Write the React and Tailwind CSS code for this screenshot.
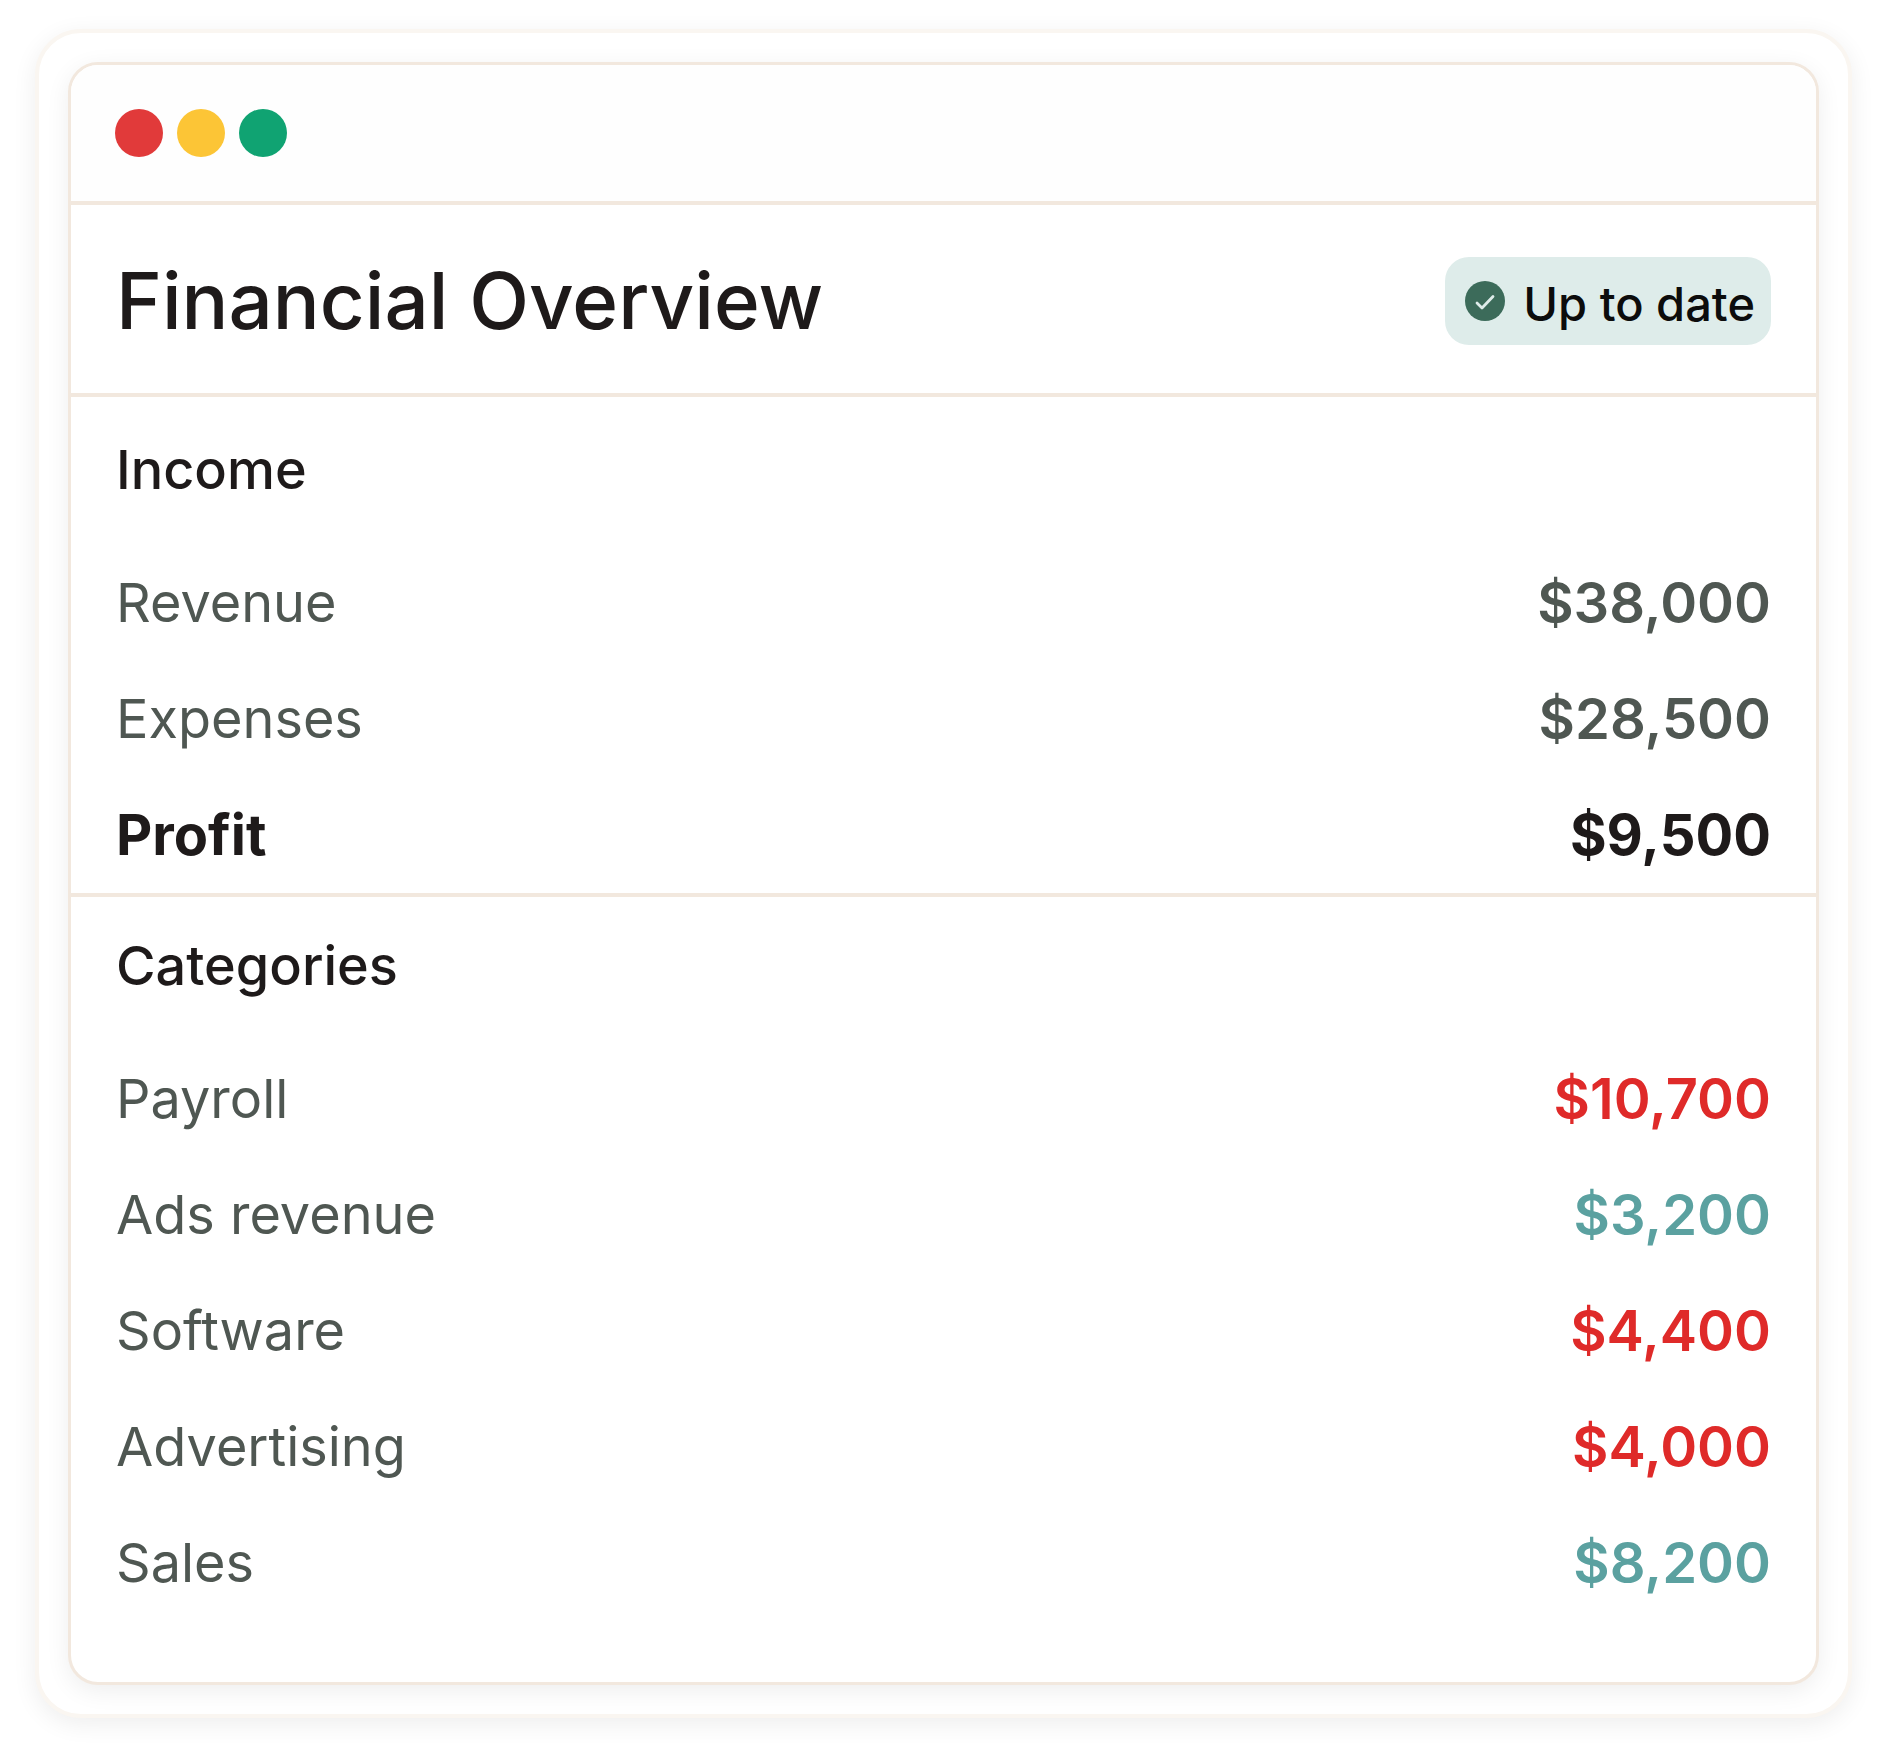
import React from "react";
import clsx from "clsx";

const INCOME = [
    { label: "Revenue", amount: "$38,000" },
    { label: "Expenses", amount: "$28,500" },
    { label: "Profit", amount: "$9,500", total: true },
];

const CATEGORIES = [
    { label: "Payroll", amount: "$10,700", type: "out" },
    { label: "Ads revenue", amount: "$3,200", type: "in" },
    { label: "Software", amount: "$4,400", type: "out" },
    { label: "Advertising", amount: "$4,000", type: "out" },
    { label: "Sales", amount: "$8,200", type: "in" },
];

const amountColor = ({ type, total }) => {
    if (total) return "text-[#1e1a1a] font-bold";
    if (type === "in") return "text-[#5ba1a0] font-semibold";
    if (type === "out") return "text-[#df2a29] font-semibold";
    return "text-[#4f5752] font-semibold";
};

function CheckBadge() {
    return (
        <div className="flex h-[88px] items-center gap-[18px] rounded-3xl bg-[#deecea] pl-5 pr-4">
            <svg width="40" height="40" viewBox="0 0 40 40" fill="none" aria-hidden="true">
                <circle cx="20" cy="20" r="20" fill="#3c6b5a" />
                <path d="M12 22l5 5L28 15.5" stroke="#deecea" strokeWidth="2.8" strokeLinecap="round" strokeLinejoin="round" />
            </svg>
            <span className="pt-1 text-[47px] font-medium leading-none text-[#0c0c0c]">Up to date</span>
        </div>
    );
}

function Rows({ rows, labelledBy }) {
    return (
        <table className="w-full" aria-labelledby={labelledBy}>
            <tbody>
                {rows.map((row) => (
                    <tr key={row.label} className="h-[116px]">
                        <th
                            scope="row"
                            className={clsx(
                                "p-0 text-left",
                                row.total ? "text-[56px] font-bold text-[#1e1a1a]" : "font-normal text-[#4f5752]"
                            )}
                        >
                            {row.label}
                        </th>
                        <td className={clsx("p-0 text-right text-[56px]", amountColor(row))}>{row.amount}</td>
                    </tr>
                ))}
            </tbody>
        </table>
    );
}

export default function App() {
    return (
        <div className="min-h-screen bg-white px-[35px] pt-[29px] pb-10 font-['Inter',sans-serif]">
            {/* Outer frame */}
            <div className="rounded-[46px] border-4 border-[#faf6f1] bg-white p-[29px] shadow-[0_6px_24px_rgba(0,0,0,0.07)]">
                {/* Window */}
                <main className="overflow-hidden rounded-[30px] border-[3px] border-[#f2e8de] bg-white text-[54px] leading-[66px] shadow-[0_6px_24px_rgba(0,0,0,0.07)]">
                    <div className="flex h-[140px] items-center gap-[14px] border-b-4 border-[#f2e8de] bg-[#fefefe] px-11">
                        <span className="size-12 rounded-full bg-[#e13a3a]" />
                        <span className="size-12 rounded-full bg-[#fcc536]" />
                        <span className="size-12 rounded-full bg-[#10a372]" />
                    </div>

                    <header className="flex h-48 items-center justify-between border-b-4 border-[#f2e8de] px-[45px] pt-1">
                        <h1 className="text-[78px] font-medium leading-none text-[#1e1a1a]">Financial Overview</h1>
                        <CheckBadge />
                    </header>

                    <section className="border-b-4 border-[#f2e8de] px-[45px] pt-10">
                        <h2 id="income" className="pb-[42px] font-medium text-[#1e1a1a]">Income</h2>
                        <Rows rows={INCOME} labelledBy="income" />
                    </section>

                    <section className="px-[45px] pt-9 pb-[61px]">
                        <h2 id="categories" className="pb-[42px] font-medium text-[#1e1a1a]">Categories</h2>
                        <Rows rows={CATEGORIES} labelledBy="categories" />
                    </section>
                </main>
            </div>
        </div>
    );
}
